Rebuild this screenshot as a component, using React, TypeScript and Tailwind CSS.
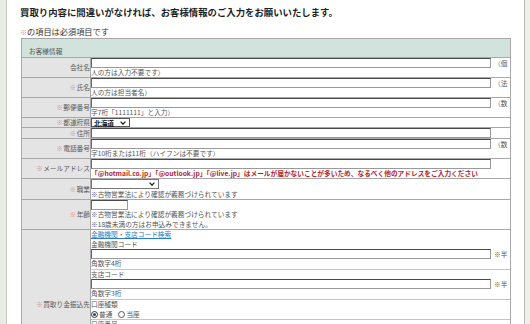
import React from "react";

const Req = () => <span className="text-[#e6869b] text-[6.3px] mr-[0.5px]">※</span>;

const Input = ({ w = "w-[400px]", h = "h-[10px]" }: { w?: string; h?: string }) => (
  <div className={`${w} ${h} shrink-0 bg-white border border-[#9a9a9a] border-t-[#4a4a4a] border-l-[#6a6a6a]`} />
);

const Chevron = () => (
  <svg width="6" height="4" viewBox="0 0 6 4" className="shrink-0">
    <polyline points="0.6,0.6 3,3.2 5.4,0.6" fill="none" stroke="#222" strokeWidth="1.3" />
  </svg>
);

const Row = ({ label, req = true, children }: { label: string; req?: boolean; children: React.ReactNode }) => (
  <div className="flex border-b border-[#a8a8a8]">
    <div className="w-[69px] shrink-0 bg-[#e4e4e4] border-r border-[#a8a8a8] flex items-center justify-end text-[6.7px] text-[#5a5a5a] leading-[9px] whitespace-nowrap">
      {req && <Req />}
      {label}
    </div>
    <div className="flex-1 min-w-0 text-[6.7px] text-[#555] leading-[9px]">{children}</div>
  </div>
);

const InputLine = ({ tail, w }: { tail?: string; w?: string }) => (
  <div className="flex items-center">
    <Input w={w} />
    {tail && <span className="ml-[3px] whitespace-nowrap">{tail}</span>}
  </div>
);

const SubRow = ({ title, hint, last }: { title: string; hint: string; last?: boolean }) => (
  <div className={`${last ? "" : "border-b border-[#c4c4c4]"}`}>
    <div className="leading-[9.5px] whitespace-nowrap">{title}</div>
    <InputLine tail="※半" />
    <div className="leading-[9.5px] whitespace-nowrap">{hint}</div>
  </div>
);

export default function App() {
  return (
    <div className="w-[530px] h-[324px] overflow-hidden bg-white flex font-['Noto_Sans_CJK_JP','Noto_Sans',sans-serif]">
      <div className="w-[7px] shrink-0 bg-[#e8ebe1] border-r border-[#c6c9bf]" />
      <div className="flex-1 min-w-0">
        <div className="pl-[13px] pt-[6px] text-[9.4px] leading-[12px] font-bold text-[#1e1e1e] whitespace-nowrap">
          買取り内容に間違いがなければ、お客様情報のご入力をお願いいたします。
        </div>
        <div className="pl-[13px] mt-[7px] text-[8.2px] leading-[12px] text-[#333] whitespace-nowrap">
          <span className="text-[#e6869b] text-[7px]">※</span>の項目は必須項目です
        </div>
        <div className="ml-[14px] w-[490px] border-l border-r border-t border-[#a8a8a8]">
          <div className="h-[19px] bg-[#d2e2dc] border-b border-[#a8a8a8] pl-[7px] pt-[8px] text-[6.7px] leading-[9px] text-[#555]">
            お客様情報
          </div>
          <Row label="会社名" req={false}>
            <InputLine tail="（個" />
            <div className="whitespace-nowrap">人の方は入力不要です）</div>
          </Row>
          <Row label="氏名">
            <InputLine tail="（法" />
            <div className="whitespace-nowrap">人の方は担当者名）</div>
          </Row>
          <Row label="郵便番号">
            <InputLine tail="（数" />
            <div className="whitespace-nowrap">字7桁「1111111」と入力）</div>
          </Row>
          <Row label="都道府県">
            <div className="w-[39px] h-[9px] bg-white border border-[#555] flex items-center justify-between pl-[2px] pr-[3px]">
              <span className="text-[6.7px] leading-[8px] font-bold text-[#111]">北海道</span>
              <Chevron />
            </div>
          </Row>
          <Row label="住所">
            <InputLine />
          </Row>
          <Row label="電話番号">
            <InputLine tail="（数" />
            <div className="whitespace-nowrap">字10桁または11桁（ハイフンは不要です）</div>
          </Row>
          <Row label="メールアドレス">
            <InputLine />
            <div className="whitespace-nowrap font-bold text-[#b31e2c]">
              「@hotmail.co.jp」「@outlook.jp」「@live.jp」はメールが届かないことが多いため、なるべく他のアドレスをご入力ください
            </div>
          </Row>
          <Row label="職業">
            <div className="w-[68px] h-[10px] bg-white border border-[#777] flex items-center justify-end pr-[3px]">
              <Chevron />
            </div>
            <div className="whitespace-nowrap leading-[10px]">※古物営業法により確認が義務づけられています</div>
          </Row>
          <Row label="年齢">
            <Input w="w-[37px]" />
            <div className="whitespace-nowrap leading-[9.5px]">※古物営業法により確認が義務づけられています</div>
            <div className="whitespace-nowrap leading-[9.5px]">※18歳未満の方はお申込みできません。</div>
          </Row>
          <Row label="買取り金振込先">
            <div className="leading-[9.5px] text-[#2a7cc0] underline whitespace-nowrap">金融機関・支店コード検索</div>
            <SubRow title="金融機関コード" hint="角数字4桁" />
            <SubRow title="支店コード" hint="角数字3桁" />
            <div className="border-b border-[#c4c4c4]">
              <div className="leading-[9.5px]">口座種類</div>
              <div className="flex items-center h-[10px] whitespace-nowrap">
                <span className="w-[7px] h-[7px] rounded-full border border-[#333] bg-white flex items-center justify-center">
                  <span className="w-[3px] h-[3px] rounded-full bg-[#1d3f7a]" />
                </span>
                <span className="ml-[1px]">普通</span>
                <span className="ml-[6px] w-[7px] h-[7px] rounded-full border border-[#555] bg-white" />
                <span className="ml-[1px]">当座</span>
              </div>
            </div>
            <SubRow title="口座番号" hint="角数字7桁" />
            <SubRow title="口座名義（カナ）" hint="全角カタカナ" last />
          </Row>
        </div>
      </div>
      <div className="w-[6px] shrink-0 bg-[#eef0e8] border-l border-[#b9bcb2]" />
    </div>
  );
}
